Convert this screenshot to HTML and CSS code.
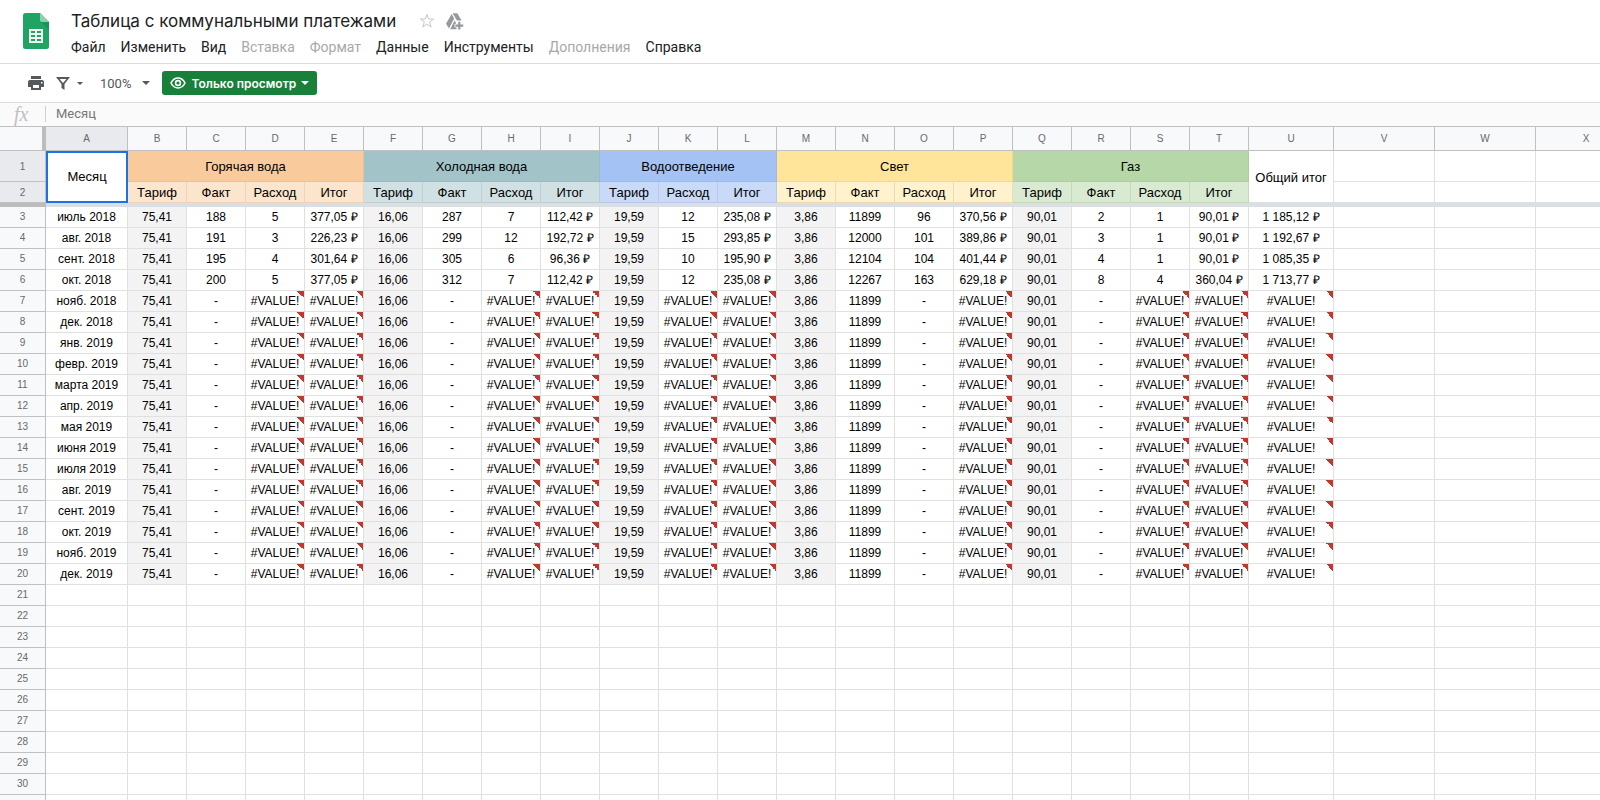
FILE: index.html
```html
<!DOCTYPE html>
<html lang="ru">
<head>
  <meta charset="utf-8">
  <title>Таблица с коммунальными платежами</title>
  <link rel="stylesheet" href="styles.css">
</head>
<body>
  <header class="header">
    <a class="logo" href="#" aria-label="Таблицы">
      <svg width="26" height="36" viewBox="0 0 26 36">
        <path d="M2.500 0H17L26 9V33.500A2.500 2.500 0 0 1 23.500 36H2.500A2.500 2.500 0 0 1 0 33.500V2.500A2.500 2.500 0 0 1 2.500 0Z" fill="#20a464"/>
        <path d="M17 0L26 9H19A2 2 0 0 1 17 7Z" fill="#8ed1b1"/>
        <path d="M18 9H26V17Z" fill="#1c9459"/>
        <path d="M6 16H20V30H6ZM8 18V20H12V18ZM14 18V20H18V18ZM8 22V24H12V22ZM14 22V24H18V22ZM8 26V28H12V26ZM14 26V28H18V26Z" fill="#f1f8f4" fill-rule="evenodd"/>
      </svg>
    </a>
    <div class="doc">
      <div class="title-row">
        <h1>Таблица с коммунальными платежами</h1>
        <button class="icon-btn star" aria-label="Пометить">
          <svg width="16" height="16" viewBox="0 0 16 16"><path d="M8 1.500L9.700 6H14.600L10.700 9L12.100 14L8 11L3.900 14L5.300 9L1.400 6H6.300Z" fill="none" stroke="#c4c6c8"/></svg>
        </button>
        <button class="icon-btn" aria-label="Добавить на Диск">
          <svg width="18" height="17" viewBox="0 0 18 17" fill="#97999c">
            <path d="M5.600 1L8.200 5.500L3 15.500L0 10.800Z"/>
            <path d="M6.600 0.300H11.300L15.600 7.500H10.900Z"/>
            <path d="M8.600 7.500L9.800 9.600V11H8.600V14.200H10.500V16.300H4.200Z"/>
            <path d="M12.200 8.800H14.400V11.600H17.300V13.700H14.400V16.600H12.200V13.700H9.400V11.600H12.200Z"/>
          </svg>
        </button>
      </div>
      <nav class="menu">
        <button>Файл</button>
        <button>Изменить</button>
        <button>Вид</button>
        <button disabled>Вставка</button>
        <button disabled>Формат</button>
        <button>Данные</button>
        <button>Инструменты</button>
        <button disabled>Дополнения</button>
        <button>Справка</button>
      </nav>
    </div>
  </header>

  <div class="toolbar">
    <button class="icon-btn" aria-label="Печать">
      <svg width="16" height="14" viewBox="0 0 16 14"><path d="M3 0H13V3H3ZM2 4H14A2 2 0 0 1 16 6V11H13V14H3V11H0V6A2 2 0 0 1 2 4ZM5 9V12H11V9ZM13 6V7.500H14.500V6Z" fill="#55585c" fill-rule="evenodd"/></svg>
    </button>
    <button class="icon-btn filter" aria-label="Фильтр">
      <svg width="14" height="13" viewBox="0 0 14 13"><path d="M0 0H14L8.500 7V13L5.500 11V7ZM3.500 2L7 6L10.500 2Z" fill="#55585c" fill-rule="evenodd"/></svg>
      <span class="caret caret-small"></span>
    </button>
    <button class="zoom">100%<span class="caret"></span></button>
    <button class="view-only">
      <svg width="16" height="12" viewBox="0 0 16 12"><path d="M1 6Q3.500 1 8 1T15 6Q12.500 11 8 11T1 6Z" fill="none" stroke="#fff" stroke-width="1.600"/><circle cx="8" cy="6" r="2.400" fill="none" stroke="#fff" stroke-width="1.600"/></svg>
      Только просмотр
      <span class="caret"></span>
    </button>
  </div>

  <div class="formula-bar">
    <label class="fx" for="formula">fx</label>
    <input type="text" id="formula" value="Месяц" readonly>
  </div>

  <div class="sheet">
    <table class="grid" id="grid"></table>
  </div>

  <script src="grid.js"></script>
</body>
</html>
```
FILE: styles.css
```css
* {
  box-sizing: border-box;
}
body {
  margin: 0;
  height: 100vh;
  display: flex;
  flex-direction: column;
  overflow: hidden;
  font-family: Roboto, "Liberation Sans", sans-serif;
  color: #202124;
  background: #fff;
}
button {
  border: none;
  background: none;
  padding: 0;
  font-family: inherit;
  color: inherit;
  cursor: pointer;
}
svg {
  display: block;
}

/* header */
.header {
  display: flex;
  align-items: flex-start;
  height: 64px;
  padding: 8px 0 0 23px;
  border-bottom: 1px solid #dadce0;
}
.logo {
  margin: 5px 22px 0 0;
}
.title-row {
  display: flex;
  align-items: center;
  height: 26px;
  gap: 11px;
}
h1 {
  margin: 0;
  font-family: Inter, "Open Sans", sans-serif;
  font-size: 17px;
  line-height: 26px;
  font-weight: 400;
}
.star {
  margin-left: 12px;
}
.menu {
  display: flex;
  gap: 15px;
}
.menu button {
  font-size: 14px;
  line-height: 26px;
}
.menu button:disabled {
  color: #a6a8ab;
  cursor: default;
}

/* toolbar */
.toolbar {
  display: flex;
  align-items: center;
  height: 39px;
  padding-left: 28px;
  border-bottom: 1px solid #dadce0;
  color: #55585c;
}
.caret {
  border: 4px solid transparent;
  border-top-color: currentColor;
  border-bottom: none;
}
.caret-small {
  border-width: 3px;
  border-bottom: none;
}
.filter {
  display: flex;
  align-items: center;
  gap: 7px;
  margin-left: 12px;
}
.zoom {
  display: flex;
  align-items: center;
  gap: 11px;
  margin-left: 17px;
  font-size: 13px;
}
.view-only {
  display: flex;
  align-items: center;
  gap: 5px;
  height: 24px;
  margin-left: 12px;
  padding: 0 8px;
  border-radius: 3px;
  background: #188038;
  color: #fff;
  font-family: Inter, "Open Sans", sans-serif;
  font-size: 12px;
  font-weight: 600;
}

/* formula bar */
.formula-bar {
  display: flex;
  align-items: center;
  height: 23px;
  padding-bottom: 2px;
  background: #fafafa;
}
.fx {
  width: 45px;
  padding-left: 14px;
  font-family: "Liberation Serif", serif;
  font-size: 20px;
  line-height: 18px;
  font-style: italic;
  color: #c0c0c0;
}
.formula-bar input {
  flex: 1;
  height: 16px;
  padding: 0 10px;
  border: none;
  border-left: 1px solid #d0d0d0;
  outline: none;
  background: none;
  font-family: inherit;
  font-size: 13px;
  color: #777;
}

/* grid */
.sheet {
  flex: 1;
  min-height: 0;
  overflow: hidden;
}
.grid {
  table-layout: fixed;
  width: 1637px;
  border-spacing: 0;
  border-top: 1px solid #c0c0c0;
  font-family: "Liberation Sans", Arial, sans-serif;
  font-size: 12px;
  line-height: 14px;
  color: #000;
}
.col-index { width: 46px; }
.col-month { width: 82px; }
.col-value { width: 59px; }
.col-total { width: 85px; }
.col-empty { width: 101px; }

.grid th,
.grid td {
  height: 21px;
  padding: 0;
  border-right: 1px solid #e0e0e0;
  border-bottom: 1px solid #e0e0e0;
  font-weight: 400;
  text-align: center;
  white-space: nowrap;
}
.grid thead th,
.grid .index {
  border-color: #c0c0c0;
  background: #f8f9fa;
  color: #666a6e;
  font-size: 10px;
}
.grid thead th {
  height: 24px;
}
.grid thead .corner {
  border-right: 4px solid #bcbcbc;
}
.grid .selected,
.grid thead .selected {
  background: #e8eaed;
}
.grid .groups th {
  height: 31px;
}
.grid .groups th,
.grid .fields th {
  padding-top: 2px;
  font-size: 13px;
}
.grid .groups .index,
.grid .fields .index {
  font-size: 10px;
}
.grid .groups .active-cell {
  padding: 0;
  border: 2px solid #1a73e8;
}
.grid .rate {
  background: #f3f3f3;
}
.grid .freeze td {
  height: 4px;
  border: none;
  background: #dadfe4;
}
.grid .freeze .freeze-index {
  background: #bcbcbc;
}

.grid .hot { background: #f9cb9c; border-color: #ecc094; }
.grid .cold { background: #a2c4c9; border-color: #9abbc0; }
.grid .drain { background: #a4c2f4; border-color: #9cb9e8; }
.grid .light { background: #ffe599; border-color: #f0d890; }
.grid .gas { background: #b6d7a8; border-color: #adcca0; }
.grid .fields .hot { background: #fce5cd; border-color: #ecd4bc; }
.grid .fields .cold { background: #d0e0e3; border-color: #bdcfd2; }
.grid .fields .drain { background: #c9daf8; border-color: #b8cae8; }
.grid .fields .light { background: #fff2cc; border-color: #ecdcb4; }
.grid .fields .gas { background: #d9ead3; border-color: #c4d8bd; }

/* red corner of a cell with an error */
.grid .error {
  background: linear-gradient(45deg, transparent 50%, #c0392f 50%) no-repeat top right / 7px 7px;
}
```
FILE: grid.js
```javascript
const GROUPS = [
  { name: 'Горячая вода', cls: 'hot', fields: ['Тариф', 'Факт', 'Расход', 'Итог'] },
  { name: 'Холодная вода', cls: 'cold', fields: ['Тариф', 'Факт', 'Расход', 'Итог'] },
  { name: 'Водоотведение', cls: 'drain', fields: ['Тариф', 'Расход', 'Итог'] },
  { name: 'Свет', cls: 'light', fields: ['Тариф', 'Факт', 'Расход', 'Итог'] },
  { name: 'Газ', cls: 'gas', fields: ['Тариф', 'Факт', 'Расход', 'Итог'] }
];
const FIELDS = GROUPS.flatMap(g => g.fields.map(name => ({ name, cls: g.cls })));
const LETTERS = 'ABCDEFGHIJKLMNOPQRSTUVWX'.split('');
const LAST_ROW = 31;

const PAID = [
  'июль 2018|75,41|188|5|377,05 ₽|16,06|287|7|112,42 ₽|19,59|12|235,08 ₽|3,86|11899|96|370,56 ₽|90,01|2|1|90,01 ₽|1 185,12 ₽',
  'авг. 2018|75,41|191|3|226,23 ₽|16,06|299|12|192,72 ₽|19,59|15|293,85 ₽|3,86|12000|101|389,86 ₽|90,01|3|1|90,01 ₽|1 192,67 ₽',
  'сент. 2018|75,41|195|4|301,64 ₽|16,06|305|6|96,36 ₽|19,59|10|195,90 ₽|3,86|12104|104|401,44 ₽|90,01|4|1|90,01 ₽|1 085,35 ₽',
  'окт. 2018|75,41|200|5|377,05 ₽|16,06|312|7|112,42 ₽|19,59|12|235,08 ₽|3,86|12267|163|629,18 ₽|90,01|8|4|360,04 ₽|1 713,77 ₽'
];
const UNPAID = '75,41|-|#VALUE!|#VALUE!|16,06|-|#VALUE!|#VALUE!|19,59|#VALUE!|#VALUE!|3,86|11899|-|#VALUE!|90,01|-|#VALUE!|#VALUE!|#VALUE!';
const UNPAID_MONTHS = [
  'нояб. 2018', 'дек. 2018', 'янв. 2019', 'февр. 2019', 'марта 2019', 'апр. 2019', 'мая 2019',
  'июня 2019', 'июля 2019', 'авг. 2019', 'сент. 2019', 'окт. 2019', 'нояб. 2019', 'дек. 2019'
];

const rows = PAID.concat(UNPAID_MONTHS.map(m => m + '|' + UNPAID)).map(r => r.split('|'));

function cell(value, col) {
  let cls = '';
  if (value === '#VALUE!') cls = 'error';
  else if (value && col > 0 && FIELDS[col - 1] && FIELDS[col - 1].name === 'Тариф') cls = 'rate';
  return `<td class="${cls}">${value}</td>`;
}

let html = '<colgroup><col class="col-index"><col class="col-month">'
  + '<col class="col-value">'.repeat(FIELDS.length)
  + '<col class="col-total">' + '<col class="col-empty">'.repeat(3) + '</colgroup>';

html += '<thead><tr><th class="corner"></th>'
  + LETTERS.map(l => `<th class="${l === 'A' ? 'selected' : ''}">${l}</th>`).join('')
  + '</tr></thead><tbody>';

html += '<tr class="groups"><th class="index selected">1</th><th class="active-cell" rowspan="2">Месяц</th>'
  + GROUPS.map(g => `<th class="${g.cls}" colspan="${g.fields.length}">${g.name}</th>`).join('')
  + '<th rowspan="2">Общий итог</th><td></td><td></td><td></td></tr>';

html += '<tr class="fields"><th class="index selected">2</th>'
  + FIELDS.map(f => `<th class="${f.cls}">${f.name}</th>`).join('')
  + '<td></td><td></td><td></td></tr>';

html += `<tr class="freeze"><td class="freeze-index"></td><td colspan="${LETTERS.length}"></td></tr>`;

for (let n = 3; n <= LAST_ROW; n++) {
  const values = rows[n - 3] || [];
  html += `<tr><th class="index">${n}</th>`
    + LETTERS.map((l, i) => cell(values[i] || '', i)).join('')
    + '</tr>';
}

document.getElementById('grid').innerHTML = html + '</tbody>';
```
